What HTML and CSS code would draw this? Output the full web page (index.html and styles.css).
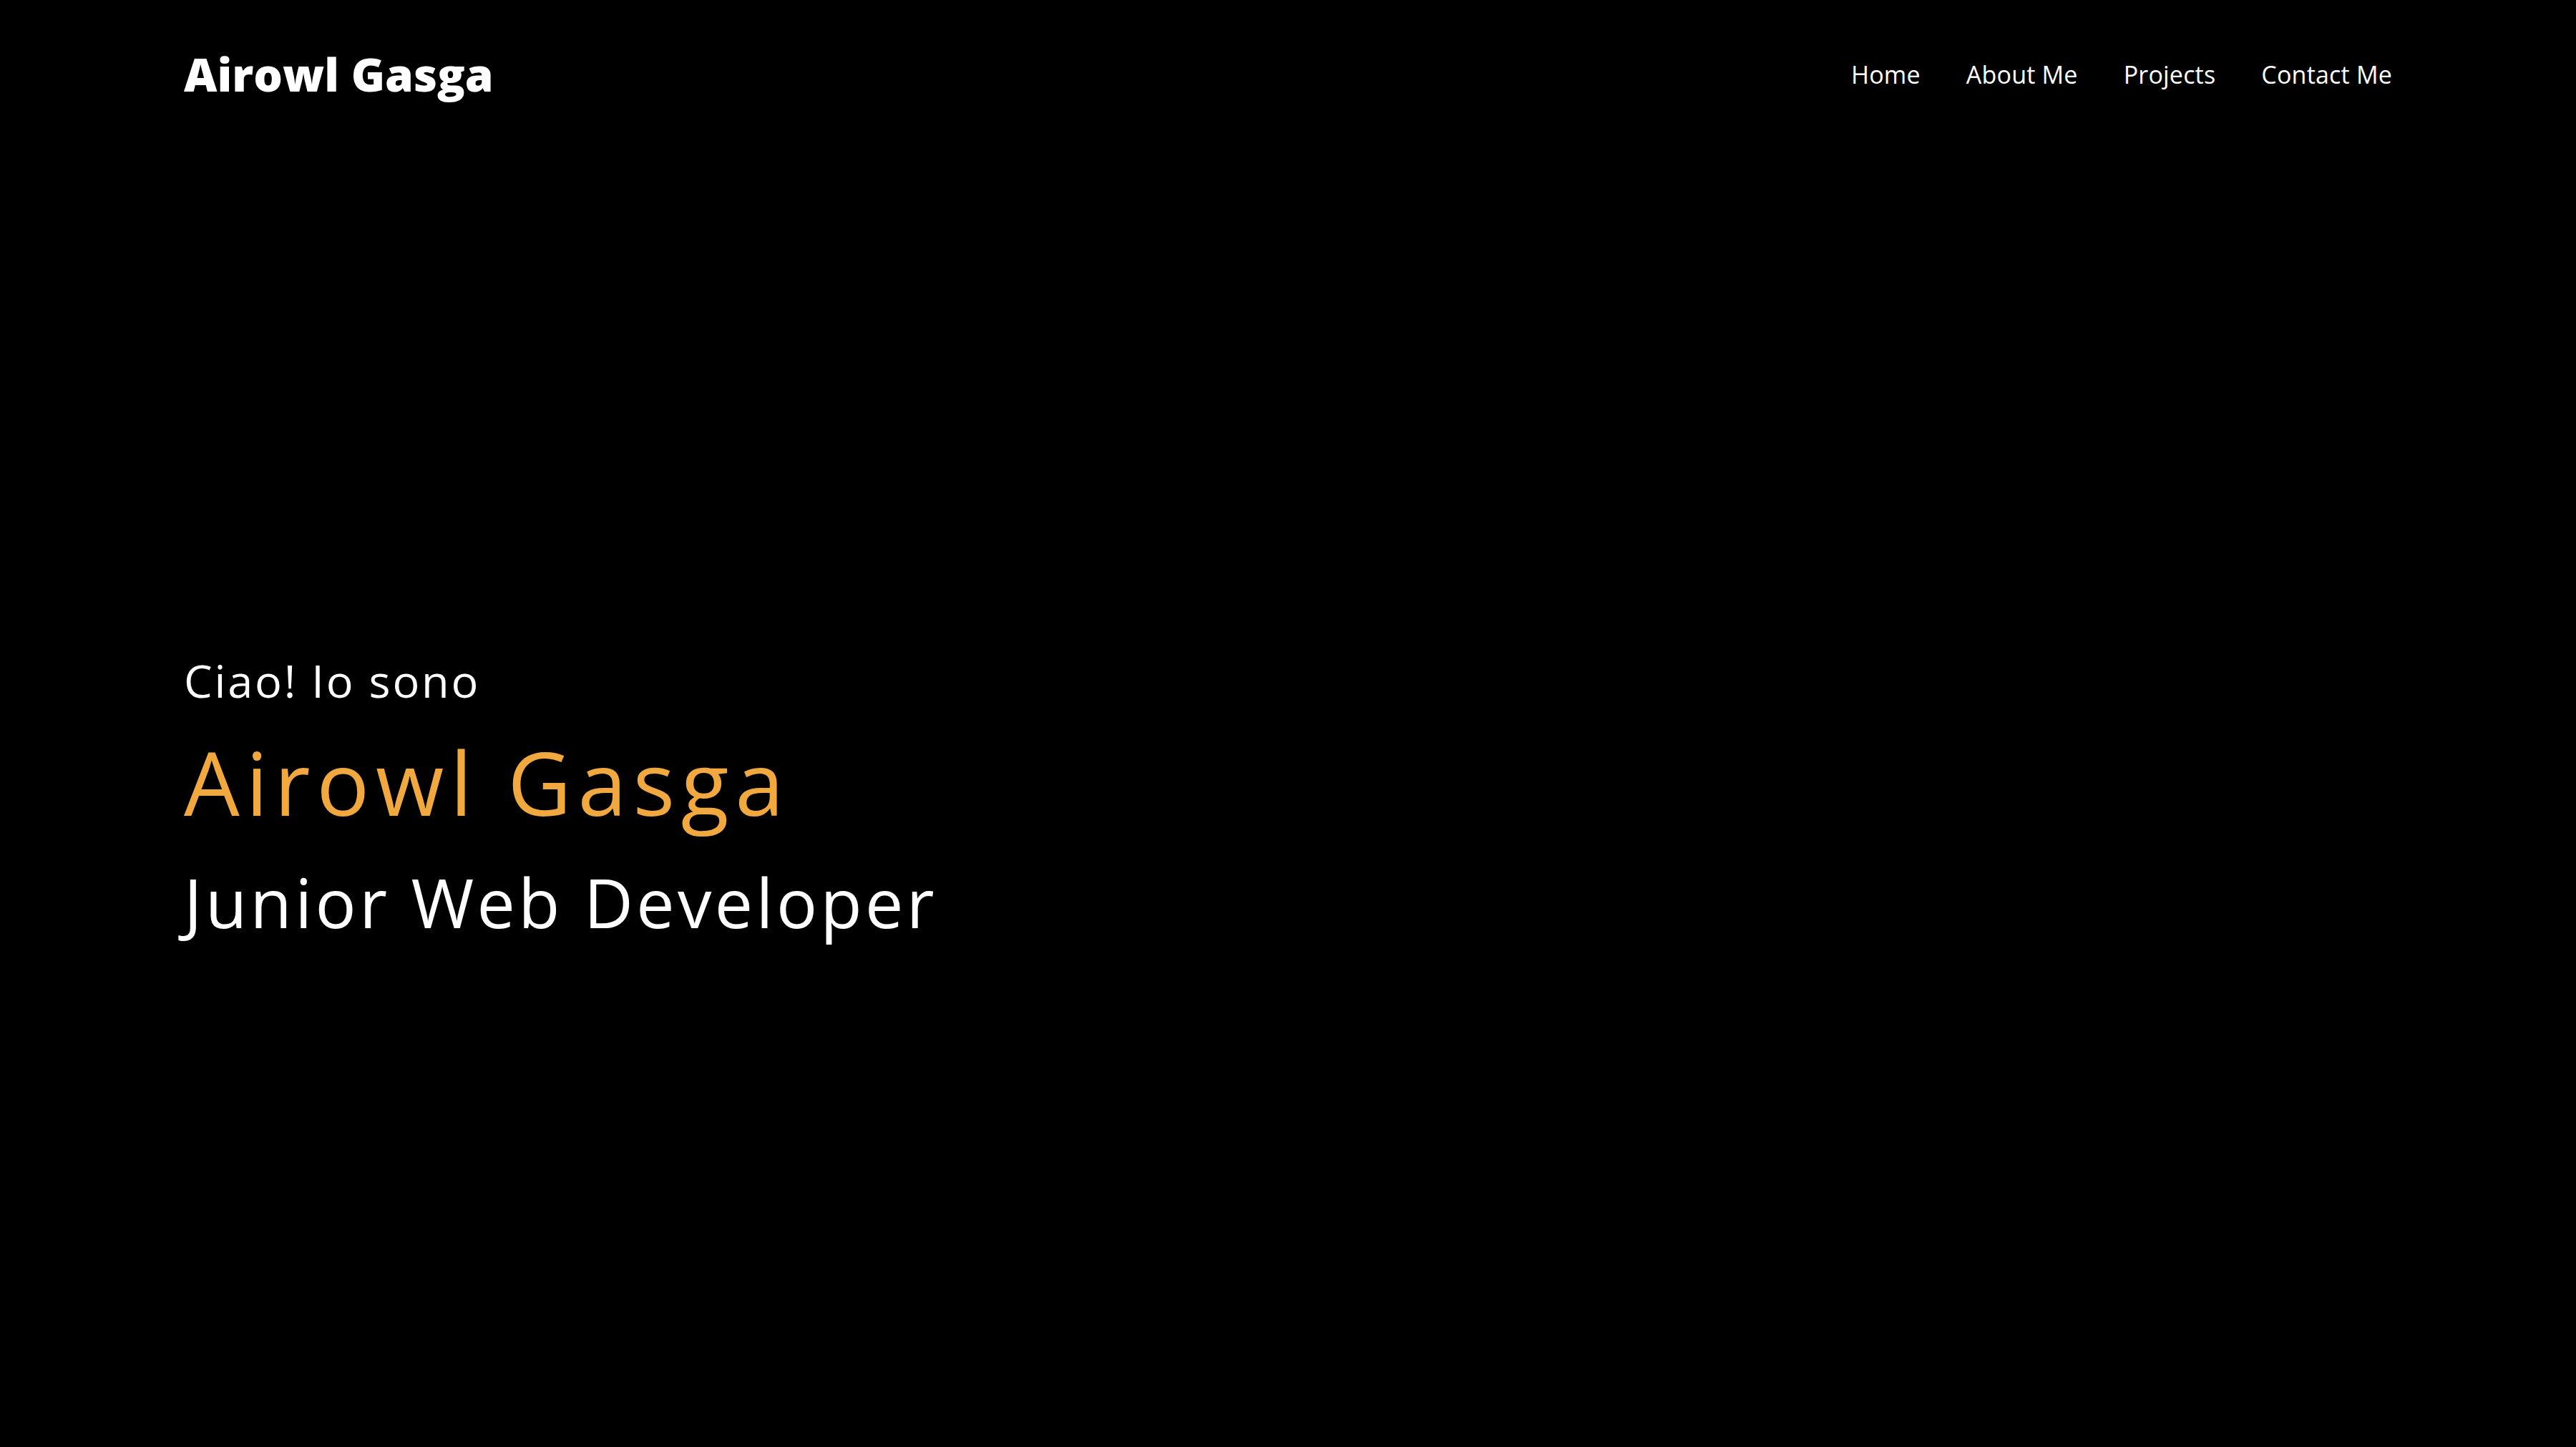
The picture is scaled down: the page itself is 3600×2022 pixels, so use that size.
FILE: index.html
```html
<!DOCTYPE html>
<html lang="it">
<head>
<meta charset="utf-8">
<title>Airowl Gasga</title>
<link rel="stylesheet" href="styles.css">
</head>
<body>
<header class="header">
  <a class="logo" href="#">Airowl Gasga</a>
  <nav class="nav">
    <a class="nav-link" href="#">Home</a>
    <a class="nav-link" href="#">About Me</a>
    <a class="nav-link" href="#">Projects</a>
    <a class="nav-link" href="#">Contact Me</a>
  </nav>
</header>
<main class="hero">
  <p class="hello">Ciao! Io sono</p>
  <h1 class="name">Airowl Gasga</h1>
  <h2 class="role">Junior Web Developer</h2>
</main>
</body>
</html>
```
FILE: styles.css
```css
* { box-sizing: border-box; }
html, body {
  margin: 0;
  padding: 0;
  background: #000;
  color: #fff;
  font-family: "Open Sans", "Noto Sans", sans-serif;
  height: 100%;
}
body { overflow: hidden; }
a { color: inherit; text-decoration: none; }

.header {
  display: flex;
  align-items: center;
  justify-content: space-between;
  padding: 72px 257px 0 257px;
}
.logo {
  font-size: 64px;
  line-height: 1;
  font-weight: 800;
}
.nav {
  display: flex;
  gap: 64px;
}
.nav-link {
  font-size: 34px;
  line-height: 1;
  font-weight: 400;
  letter-spacing: 0.2px;
}

.hero {
  padding: 783px 257px 0 257px;
}
.hello {
  margin: 0;
  font-size: 63px;
  line-height: 1;
  font-weight: 400;
  letter-spacing: 2.8px;
}
.name {
  margin: 49px 0 0 0;
  font-size: 123px;
  line-height: 1;
  font-weight: 400;
  letter-spacing: 8.7px;
  color: #f1a83e;
}
.role {
  margin: 59px 0 0 0;
  font-size: 95px;
  line-height: 1;
  font-weight: 400;
  letter-spacing: 4.4px;
}
```
